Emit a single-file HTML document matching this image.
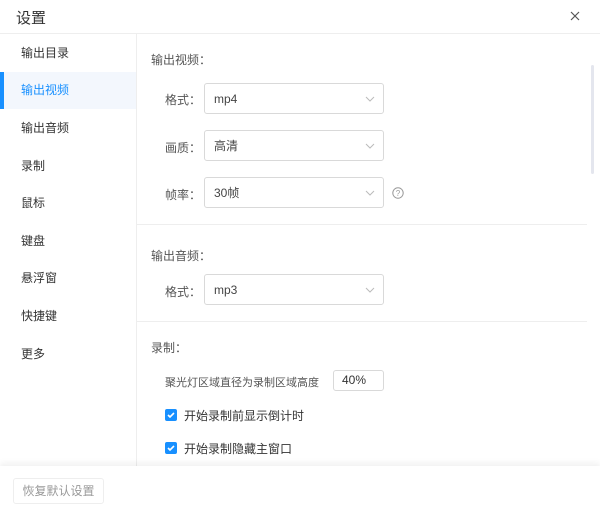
<!DOCTYPE html><html><head><meta charset="utf-8"><style>
*{margin:0;padding:0;box-sizing:border-box}
body{width:600px;height:514px;background:#fff;font-family:"Liberation Sans","Noto Sans CJK SC",sans-serif;position:relative;overflow:hidden;color:#333;font-size:12px}
.a{position:absolute}
.side div{position:absolute;left:0;width:136px;height:37px;line-height:37px;padding-left:21px;font-size:12px;color:#333}
.sel{position:absolute;left:204px;width:180px;height:31px;border:1px solid #d9d9d9;border-radius:3px;line-height:30px;padding-left:9px;font-size:12px;color:#444}
.sel svg{position:absolute;right:8px;top:12px}
.lbl{position:absolute;left:165px;font-size:12px;color:#555}
.cb{position:absolute;left:165px;width:12px;height:12px;background:#1890ff;border-radius:2px}
</style></head><body>
<div class="a" style="left:16px;top:7px;font-size:15px;color:#333">设置</div>
<svg class="a" style="left:570px;top:11px" width="10" height="10"><path d="M1 1L9 9M9 1L1 9" stroke="#555" stroke-width="1.2"/></svg>
<div class="a" style="left:0;top:33px;width:600px;height:1px;background:#eee"></div>
<div class="a" style="left:136px;top:34px;width:1px;height:434px;background:#eee"></div>
<div class="side">
<div style="top:35px">输出目录</div>
<div style="top:72px;background:#f3f7fd;color:#1890ff">输出视频</div>
<div style="top:110px">输出音频</div>
<div style="top:148px">录制</div>
<div style="top:185px">鼠标</div>
<div style="top:223px">键盘</div>
<div style="top:260px">悬浮窗</div>
<div style="top:298px">快捷键</div>
<div style="top:336px">更多</div>
</div>
<div class="a" style="left:0;top:72px;width:4px;height:37px;background:#1890ff"></div>
<div class="a" style="left:151px;top:51px;color:#555">输出视频：</div>
<div class="lbl" style="top:91px">格式：</div>
<div class="sel" style="top:83px">mp4<svg width="10" height="6"><path d="M1 1L5 5L9 1" fill="none" stroke="#bbb"/></svg></div>
<div class="lbl" style="top:139px">画质：</div>
<div class="sel" style="top:130px">高清<svg width="10" height="6"><path d="M1 1L5 5L9 1" fill="none" stroke="#bbb"/></svg></div>
<div class="lbl" style="top:186px">帧率：</div>
<div class="sel" style="top:177px">30帧<svg width="10" height="6"><path d="M1 1L5 5L9 1" fill="none" stroke="#bbb"/></svg></div>
<svg class="a" style="left:392px;top:187px" width="12" height="12"><circle cx="6" cy="6" r="5.2" fill="none" stroke="#999"/><text x="6" y="9" font-size="8" text-anchor="middle" fill="#999" font-family="Liberation Sans">?</text></svg>
<div class="a" style="left:137px;top:224px;width:450px;height:1px;background:#eee"></div>
<div class="a" style="left:151px;top:247px;color:#555">输出音频：</div>
<div class="lbl" style="top:283px">格式：</div>
<div class="sel" style="top:274px">mp3<svg width="10" height="6"><path d="M1 1L5 5L9 1" fill="none" stroke="#bbb"/></svg></div>
<div class="a" style="left:137px;top:321px;width:450px;height:1px;background:#eee"></div>
<div class="a" style="left:151px;top:339px;color:#555">录制：</div>
<div class="lbl" style="top:374px;font-size:11px">聚光灯区域直径为录制区域高度</div>
<div class="a" style="left:333px;top:370px;width:51px;height:21px;border:1px solid #d9d9d9;border-radius:3px;padding-left:8px;line-height:19px">40%</div>
<div class="cb" style="top:409px"><svg width="12" height="12"><path d="M3 6L5 8L9 4" fill="none" stroke="#fff" stroke-width="1.6"/></svg></div>
<div class="a" style="left:184px;top:407px">开始录制前显示倒计时</div>
<div class="cb" style="top:442px"><svg width="12" height="12"><path d="M3 6L5 8L9 4" fill="none" stroke="#fff" stroke-width="1.6"/></svg></div>
<div class="a" style="left:184px;top:440px">开始录制隐藏主窗口</div>
<div class="a" style="left:591px;top:65px;width:3px;height:109px;background:#e4e6ee;border-radius:2px"></div>
<div class="a" style="left:0;top:466px;width:600px;height:48px;background:#fff;box-shadow:0 -3px 6px rgba(0,0,0,0.06)"></div>
<div class="a" style="left:13px;top:478px;width:91px;height:26px;border:1px solid #eee;border-radius:3px;text-align:center;line-height:24px;color:#999">恢复默认设置</div>
</body></html>
